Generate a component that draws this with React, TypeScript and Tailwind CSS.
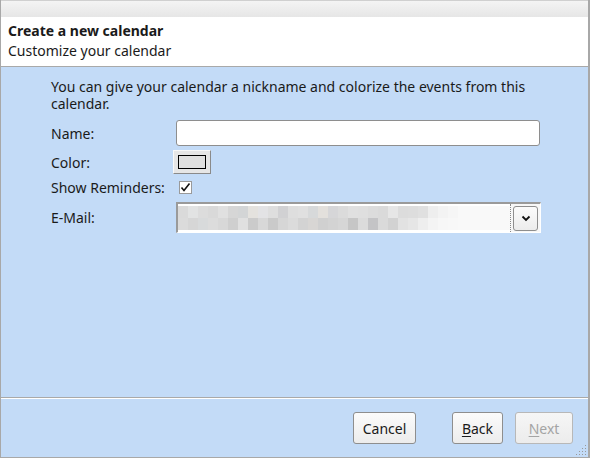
import React from "react";

const cellsTop = [
  "bg-[#dadada]","bg-[#e2e3e3]","bg-[#dcdcdc]","bg-[#d9d9d9]","bg-[#e0e0e0]","bg-[#d6d6d6]","bg-[#d3d5d6]","bg-[#e4e2de]","bg-[#e3e3e5]","bg-[#dedede]",
  "bg-[#d1d1d3]","bg-[#dedede]","bg-[#e0e0e0]","bg-[#d7d9da]","bg-[#e3e0dc]","bg-[#d6d6d8]","bg-[#dbdbdb]","bg-[#e0e0e0]","bg-[#dfdfdf]","bg-[#dcdcdc]",
  "bg-[#dadada]","bg-[#e6e6e6]","bg-[#dcdcdc]","bg-[#dddddd]","bg-[#e0e0e0]","bg-[#eeeeee]","bg-[#f3f3f3]","bg-[#f6f6f6]",
];
const cellsBot = [
  "bg-[#dbdbdb]","bg-[#d6d6d6]","bg-[#d8dadb]","bg-[#dcdcdc]","bg-[#d8d8d8]","bg-[#cfcfcf]","bg-[#e0e0e0]","bg-[#cbcbcb]","bg-[#d8d8d8]","bg-[#cacaca]",
  "bg-[#d6d6d6]","bg-[#dbdbdb]","bg-[#d3d3d3]","bg-[#d8d6d4]","bg-[#d0d0d0]","bg-[#d3d3d3]","bg-[#d6d6d6]","bg-[#c6c6c6]","bg-[#dbdbdb]","bg-[#c4c4c6]",
  "bg-[#dadada]","bg-[#d2d2d2]","bg-[#e2e2e2]","bg-[#e6e6e6]","bg-[#eeeeee]","bg-[#f4f4f4]","bg-[#f7f7f7]","bg-[#f8f8f8]",
];

export default function App() {
  return (
    <div
      className="w-[590px] h-[458px] flex flex-col bg-[#c3dbf7] text-[#1a1a1a] border-l border-r-2 border-b border-[#a8a8a8] overflow-hidden"
      style={{ fontFamily: '"Noto Sans", "DejaVu Sans", sans-serif' }}
    >
      {/* top strip */}
      <div className="h-[17px] shrink-0 bg-gradient-to-b from-[#f4f4f4] to-[#e6e6e6] border-t border-[#d0d0d0]" />
      {/* header */}
      <div className="h-[50px] shrink-0 bg-white border-b border-[#a9a9a9] px-[7px] pt-[4px] leading-[20px] text-[14px]">
        <div className="font-bold">Create a new calendar</div>
        <div>Customize your calendar</div>
      </div>
      {/* content */}
      <div className="flex-1 pl-[50px] pr-[40px] pt-[11px] text-[14px]">
        <p className="leading-[17px] w-[480px]">
          You can give your calendar a nickname and colorize the events from this calendar.
        </p>
        <div className="mt-[8px] flex flex-col">
          <div className="flex items-center h-[26px]">
            <span className="w-[125px] shrink-0">Name:</span>
            <div className="w-[364px] shrink-0 h-[26px] bg-white border border-[#8e8e8e] rounded-[3px]" />
          </div>
          <div className="flex items-center h-[24px] mt-[4px]">
            <span className="w-[122px] shrink-0">Color:</span>
            <div className="w-[38px] h-[24px] bg-[#e6e6e6] border border-t-[#f8f8f8] border-l-[#f8f8f8] border-r-[#8a8a8a] border-b-[#8a8a8a] flex items-center justify-center">
              <div className="w-[28px] h-[14px] bg-[#e0e0e0] border border-black" />
            </div>
          </div>
          <div className="flex items-center h-[22px] mt-[2px]">
            <span className="w-[128px] shrink-0">Show Reminders:</span>
            <div className="w-[13px] h-[13px] bg-white border border-[#9a9a9a] flex items-center justify-center">
              <svg width="11" height="11" viewBox="0 0 11 11">
                <path d="M1.5 5.5 L4 8.5 L9.5 1.5" fill="none" stroke="#111" strokeWidth="1.6" />
              </svg>
            </div>
          </div>
          <div className="flex items-center h-[31px] mt-[4px]">
            <span className="w-[125px] shrink-0">E-Mail:</span>
            <div className="w-[365px] shrink-0 h-[31px] border-t-2 border-l-2 border-[#9a9a9a] border-r border-b border-r-white border-b-white flex bg-white">
              <div className="flex-1 flex flex-col justify-center py-[2px] overflow-hidden">
                <div className="flex h-[12px]">
                  {cellsTop.map((c, i) => (
                    <div key={i} className={`w-[10px] h-[12px] shrink-0 ${c}`} />
                  ))}
                  <div className="flex-1 bg-[#f9f9f9]" />
                </div>
                <div className="flex h-[12px]">
                  {cellsBot.map((c, i) => (
                    <div key={i} className={`w-[10px] h-[12px] shrink-0 ${c}`} />
                  ))}
                  <div className="flex-1 bg-[#f9f9f9]" />
                </div>
              </div>
              <div className="w-[30px] shrink-0 flex items-center border-l border-dotted border-[#888] bg-[#f7f7f7]">
                <div className="ml-[2px] w-[25px] h-[25px] rounded-[3px] border border-[#8e8e8e] bg-gradient-to-b from-[#fbfbfb] to-[#ececec] flex items-center justify-center">
                  <svg width="10" height="7" viewBox="0 0 10 7">
                    <path d="M1.5 1.5 L5 5 L8.5 1.5" fill="none" stroke="#111" strokeWidth="1.8" />
                  </svg>
                </div>
              </div>
            </div>
          </div>
        </div>
      </div>
      {/* separator */}
      <div className="h-[2px] shrink-0 border-t border-[#a9a9a9] bg-white" />
      {/* footer */}
      <div className="h-[58px] shrink-0 relative flex items-center justify-end pr-[15px] text-[14px]">
        <button className="w-[63px] h-[32px] rounded-[3px] border border-[#8e8e8e] bg-gradient-to-b from-[#fbfbfb] to-[#ececec] text-[#1a1a1a]">
          Cancel
        </button>
        <button className="ml-[36px] w-[51px] h-[32px] rounded-[3px] border border-[#8e8e8e] bg-gradient-to-b from-[#fbfbfb] to-[#ececec] text-[#1a1a1a]">
          <span className="underline underline-offset-2">B</span>ack
        </button>
        <button className="ml-[12px] w-[58px] h-[32px] rounded-[3px] border border-[#b8b8b8] bg-gradient-to-b from-[#f6f6f6] to-[#ececec] text-[#a4a4a4]">
          <span className="underline underline-offset-2">N</span>ext
        </button>
        <svg className="absolute right-[1px] bottom-[1px]" width="12" height="12" viewBox="0 0 12 12">
          {[[10,2],[10,5],[10,8],[10,11],[7,5],[7,8],[7,11],[4,8],[4,11],[1,11]].map(([x,y],i)=>(
            <rect key={i} x={x} y={y-1} width="1" height="1" fill="#9a9a9a" />
          ))}
        </svg>
      </div>
    </div>
  );
}
